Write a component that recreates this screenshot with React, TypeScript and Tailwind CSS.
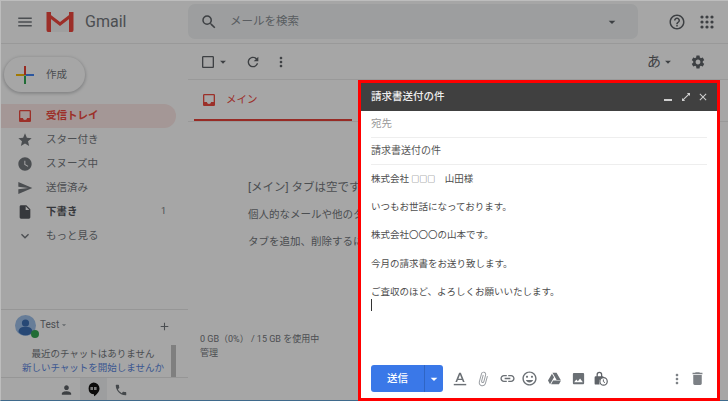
import React from "react";
import {
  MdMenu,
  MdSearch,
  MdArrowDropDown,
  MdHelpOutline,
  MdRefresh,
  MdMoreVert,
  MdSettings,
  MdCheckBoxOutlineBlank,
  MdInbox,
  MdStar,
  MdWatchLater,
  MdSend,
  MdInsertDriveFile,
  MdExpandMore,
  MdAdd,
  MdPerson,
  MdPhone,
  MdAttachFile,
  MdLink,
  MdInsertEmoticon,
  MdPhoto,
  MdDelete,
  MdClose,
} from "react-icons/md";
import { FaGoogleDrive } from "react-icons/fa";

const font = "font-['Roboto','Noto_Sans_CJK_JP',sans-serif]";

const GmailLogo = () => (
  <svg width="28" height="22" viewBox="0 0 28 22">
    <path d="M1 3 L14 13 L27 3 V21 H1 Z" fill="#f5f5f5" />
    <path d="M1 1 L14 11 L27 1 V5 L14 15 L1 5 Z" fill="#f0483e" />
    <path d="M0.5 1 H5 V21 H2 Q0.5 21 0.5 19 Z" fill="#f0483e" />
    <path d="M23 1 H27.5 V19 Q27.5 21 26 21 H23 Z" fill="#f0483e" />
  </svg>
);

const ComposePlus = () => (
  <svg width="18" height="18" viewBox="0 0 18 18">
    <rect x="8" y="0" width="2" height="9" fill="#ea4335" />
    <rect x="10" y="8" width="8" height="2" fill="#4285f4" />
    <rect x="8" y="9.5" width="2" height="8.5" fill="#34a853" />
    <rect x="0" y="8" width="8" height="2" fill="#fbbc05" />
  </svg>
);

const HangoutsIcon = () => (
  <svg width="13" height="15" viewBox="0 0 13 15">
    <path d="M6.5 0.5 a6 6 0 0 1 6 6 c0 3.4-3 6.2-5.5 7.8 v-2 h-0.5 a6 6 0 0 1 0-11.8z" fill="#111" />
    <rect x="3.4" y="5" width="2.6" height="3" fill="#bbb" />
    <rect x="7" y="5" width="2.6" height="3" fill="#bbb" />
  </svg>
);

const TextColorIcon = () => (
  <svg width="16" height="16" viewBox="0 0 18 18" fill="#6b7075">
    <path d="M8 2 h2 l4.2 10.5 h-1.9 l-0.9-2.4 h-4.8 l-0.9 2.4 h-1.9z M9 4.2 l-1.8 4.4 h3.6z" />
    <rect x="2" y="14.5" width="14" height="1.6" />
  </svg>
);

const ConfidentialIcon = () => (
  <svg width="16" height="16" viewBox="0 0 20 20">
    <path
      d="M8 1 a3.6 3.6 0 0 1 3.6 3.6 V6.5 H13 V8 A6 6 0 0 0 8.3 17 H3.5 A1.5 1.5 0 0 1 2 15.5 V8 A1.5 1.5 0 0 1 3.5 6.5 H4.4 V4.6 A3.6 3.6 0 0 1 8 1z M8 2.6 a2 2 0 0 0-2 2 V6.5 h4 V4.6 a2 2 0 0 0-2-2z"
      fill="#5f6368"
      fillRule="evenodd"
    />
    <circle cx="13.2" cy="13" r="4.6" fill="none" stroke="#5f6368" strokeWidth="1.5" />
    <path d="M13 10.5 V13.3 L15 14.6" fill="none" stroke="#5f6368" strokeWidth="1.2" />
  </svg>
);

const NavRow = ({
  icon,
  label,
  count,
  active,
  bold,
}: {
  icon: React.ReactNode;
  label: string;
  count?: string;
  active?: boolean;
  bold?: boolean;
}) => (
  <div
    className={`flex h-[24px] w-[176px] items-center rounded-r-full pl-[17px] pr-[9px] text-[10.5px] ${
      active ? "bg-[#fce8e6] font-bold text-[#f04a3f]" : bold ? "font-bold text-[#54575c]" : "text-[#74787d]"
    }`}
  >
    <span className="flex w-[29px] shrink-0 items-center text-[16px]">{icon}</span>
    <span className="flex-1">{label}</span>
    {count && <span className="mr-[1px] text-[9px] font-normal text-[#74787d]">{count}</span>}
  </div>
);

const Sidebar = () => (
  <aside className="flex w-[188px] shrink-0 flex-col">
    <div className="px-[4px] pt-[13px]">
      <button className="flex h-[35px] w-[81px] items-center rounded-full bg-white pl-[12px] text-[10.5px] text-[#74787d] shadow-[0_1px_3px_1px_rgba(60,64,67,0.25)]">
        <span className="mr-[12px] flex w-[18px]">
          <ComposePlus />
        </span>
        作成
      </button>
    </div>
    <nav className="mt-[12px]">
      <NavRow active icon={<MdInbox />} label="受信トレイ" />
      <NavRow icon={<MdStar />} label="スター付き" />
      <NavRow icon={<MdWatchLater />} label="スヌーズ中" />
      <NavRow icon={<MdSend />} label="送信済み" />
      <NavRow bold icon={<MdInsertDriveFile />} label="下書き" count="1" />
      <NavRow icon={<MdExpandMore />} label="もっと見る" />
    </nav>
    <div className="mt-auto border-t border-[#e6e6e6]">
      <div className="flex h-[35px] items-start pl-[15px] pr-[17px] pt-[5px]">
        <div className="relative h-[21px] w-[21px] rounded-full bg-[#9fc0ea]">
          <svg viewBox="0 0 21 21" className="h-[21px] w-[21px]">
            <circle cx="10.5" cy="8" r="3.6" fill="#3d6fb4" />
            <path d="M3.5 17 c0-4 3.5-5.2 7-5.2 s7 1.2 7 5.2 a9 9 0 0 1-14 0z" fill="#3d6fb4" />
          </svg>
          <span className="absolute bottom-[-2px] right-[-3px] h-[8px] w-[8px] rounded-full bg-[#34a853]" />
        </div>
        <span className="ml-[4px] mt-[3px] text-[10px] leading-[14px] text-[#74787d]">Test</span>
        <MdArrowDropDown className="mt-[5px] text-[10px] text-[#9aa0a6]" />
        <MdAdd className="ml-auto mt-[5px] text-[13px] text-[#74787d]" />
      </div>
      <div className="flex h-[32px]">
        <div className="w-[171px] pl-[15px] pt-[2px] text-center text-[9.5px] leading-[14px]">
          <p className="whitespace-nowrap text-[#74787d]">最近のチャットはありません</p>
          <p className="whitespace-nowrap text-[#5a86e0]">新しいチャットを開始しませんか</p>
        </div>
        <div className="h-[32px] w-[5px] bg-[#c4c4c4]" />
      </div>
      <div className="flex h-[24px] items-center border-t border-[#e6e6e6] pl-[53px]">
        <MdPerson className="w-[27px] text-[14px] text-[#5f6368]" />
        <div className="flex h-full w-[27px] items-center justify-center bg-[#f1f3f4]">
          <HangoutsIcon />
        </div>
        <MdPhone className="ml-[7px] text-[14px] text-[#6b7075]" />
      </div>
    </div>
  </aside>
);

const MainPane = () => (
  <main className="relative flex min-w-0 flex-1 flex-col overflow-hidden">
    <div className="flex h-[36px] shrink-0 items-center border-b border-[#ececec] pl-[12px] pr-[22px] text-[#5f6368]">
      <MdCheckBoxOutlineBlank className="text-[16px]" />
      <MdArrowDropDown className="text-[14px]" />
      <MdRefresh className="ml-[15px] text-[16px]" />
      <MdMoreVert className="ml-[12px] text-[16px]" />
      <span className="ml-auto text-[14px] text-[#5f6368]">あ</span>
      <MdArrowDropDown className="text-[14px]" />
      <MdSettings className="ml-[15px] text-[16px]" />
    </div>
    <div className="flex h-[42px] shrink-0 border-b border-[#ececec]">
      <div className="ml-[6px] flex h-[41px] w-[158px] items-center border-b-2 border-[#e8433a] pl-[7px] text-[10.5px] text-[#f04a3f]">
        <MdInbox className="mr-[9px] text-[16px]" />
        メイン
      </div>
    </div>
    <div className="whitespace-nowrap pl-[60px] pt-[58px] text-[#74787d]">
      <p className="text-[11.5px] leading-[14px]">[メイン] タブは空です</p>
      <p className="mt-[14px] text-[10.5px] leading-[14px]">個人的なメールや他のタ</p>
      <p className="mt-[13px] text-[10.5px] leading-[14px]">タブを追加、削除するに</p>
    </div>
    <div className="mt-auto mb-[41px] pl-[12px] text-[9px] leading-[14px] text-[#74787d]">
      <p>0 GB（0%） / 15 GB を使用中</p>
      <p>管理</p>
    </div>
  </main>
);

const ComposeWindow = () => (
  <section className="absolute bottom-0 right-[8px] flex h-[321px] w-[362px] flex-col border-[3.5px] border-[#ff0000] bg-white text-[#6b7075]">
    <header className="flex h-[28px] shrink-0 items-center bg-[#404040] pl-[10px] pr-[8px] text-[10.5px] font-medium text-[#eeeeee]">
      <span className="flex-1">請求書送付の件</span>
      <span className="mr-[1px] mt-[6px] h-[1.5px] w-[8px] bg-[#cfcfcf]" />
      <svg width="8" height="8" viewBox="0 0 9 9" className="ml-[9px]" fill="#cfcfcf">
        <path d="M5.5 0 H9 V3.5 L7.7 2.2 L2.2 7.7 L3.5 9 H0 V5.5 L1.3 6.8 L6.8 1.3 Z" />
      </svg>
      <MdClose className="ml-[7px] text-[12px] text-[#cfcfcf]" />
    </header>
    <div className="flex flex-1 flex-col px-[10px]">
      <div className="flex h-[26.5px] shrink-0 items-center border-b border-[#eeeeee] text-[10.5px] text-[#999999]">
        宛先
      </div>
      <div className="flex h-[27px] shrink-0 items-center border-b border-[#eeeeee] text-[10px] text-[#555555]">
        請求書送付の件
      </div>
      <div className="pt-[7.5px] text-[9.5px] leading-[14px] text-[#4d4d4d]">
        <p className="h-[14px]">
          株式会社 <span className="text-[8px] leading-none">□□□</span>　山田様
        </p>
        <p className="mt-[14.2px]">いつもお世話になっております。</p>
        <p className="mt-[14.2px]">株式会社〇〇〇の山本です。</p>
        <p className="mt-[14.2px]">今月の請求書をお送り致します。</p>
        <p className="mt-[14.2px]">ご査収のほど、よろしくお願いいたします。</p>
        <span className="block h-[12px] w-px bg-[#333333]" />
      </div>
      <div className="mt-auto mb-[6px] flex h-[27px] items-center">
        <div className="flex h-[27px] w-[72px] overflow-hidden rounded-[3px] bg-[#3a78e8] text-white">
          <span className="flex w-[53px] items-center justify-center text-[10.5px] font-medium">送信</span>
          <span className="flex flex-1 items-center justify-center border-l border-[#2f65c4] text-[16px]">
            <MdArrowDropDown />
          </span>
        </div>
        <div className="ml-[8px] flex w-[18px] justify-center"><TextColorIcon /></div>
        <MdAttachFile className="ml-[6px] rotate-[15deg] text-[16px] text-[#9a9ea3]" />
        <MdLink className="ml-[8px] text-[17px]" />
        <MdInsertEmoticon className="ml-[5px] text-[17px]" />
        <FaGoogleDrive className="ml-[10px] text-[13px]" />
        <MdPhoto className="ml-[10px] text-[15px]" />
        <div className="ml-[7px] flex"><ConfidentialIcon /></div>
        <MdMoreVert className="ml-auto text-[16px] text-[#7c8085]" />
        <MdDelete className="ml-[4px] mr-[1px] text-[17px] text-[#7c8085]" />
      </div>
    </div>
  </section>
);

export default function App() {
  return (
    <div className={`relative flex h-[401px] w-[728px] flex-col overflow-hidden bg-white ${font}`}>
      <header className="flex h-[44px] shrink-0 items-center border-b border-[#ececec]">
        <div className="flex w-[188px] shrink-0 items-center pl-[16px] text-[#74787d]">
          <MdMenu className="text-[18px]" />
          <span className="ml-[12px] flex"><GmailLogo /></span>
          <span className="ml-[11px] text-[16px]">Gmail</span>
        </div>
        <div className="flex h-[35px] w-[450px] items-center rounded-[7px] bg-[#f1f3f4] pl-[12px] pr-[18px] text-[#5f6368]">
          <MdSearch className="text-[18px]" />
          <span className="ml-[12px] flex-1 text-[11.5px] text-[#8a9095]">メールを検索</span>
          <MdArrowDropDown className="text-[16px]" />
        </div>
        <MdHelpOutline className="ml-[30px] text-[18px] text-[#5f6368]" />
        <svg width="14" height="14" viewBox="0 0 14 14" className="ml-[14px]" fill="#5f6368">
          {[2, 7, 12].map((y) =>
            [2, 7, 12].map((x) => <circle key={`${x}-${y}`} cx={x} cy={y} r="1.6" />),
          )}
        </svg>
      </header>
      <div className="flex min-h-0 flex-1">
        <Sidebar />
        <MainPane />
      </div>
      {/* modal dim over the whole page */}
      <div className="absolute inset-0 border-t border-l border-[#bdbdbd] border-b-[#3f6a8c] bg-black/35 [border-bottom-width:1px]" />
      <ComposeWindow />
    </div>
  );
}
